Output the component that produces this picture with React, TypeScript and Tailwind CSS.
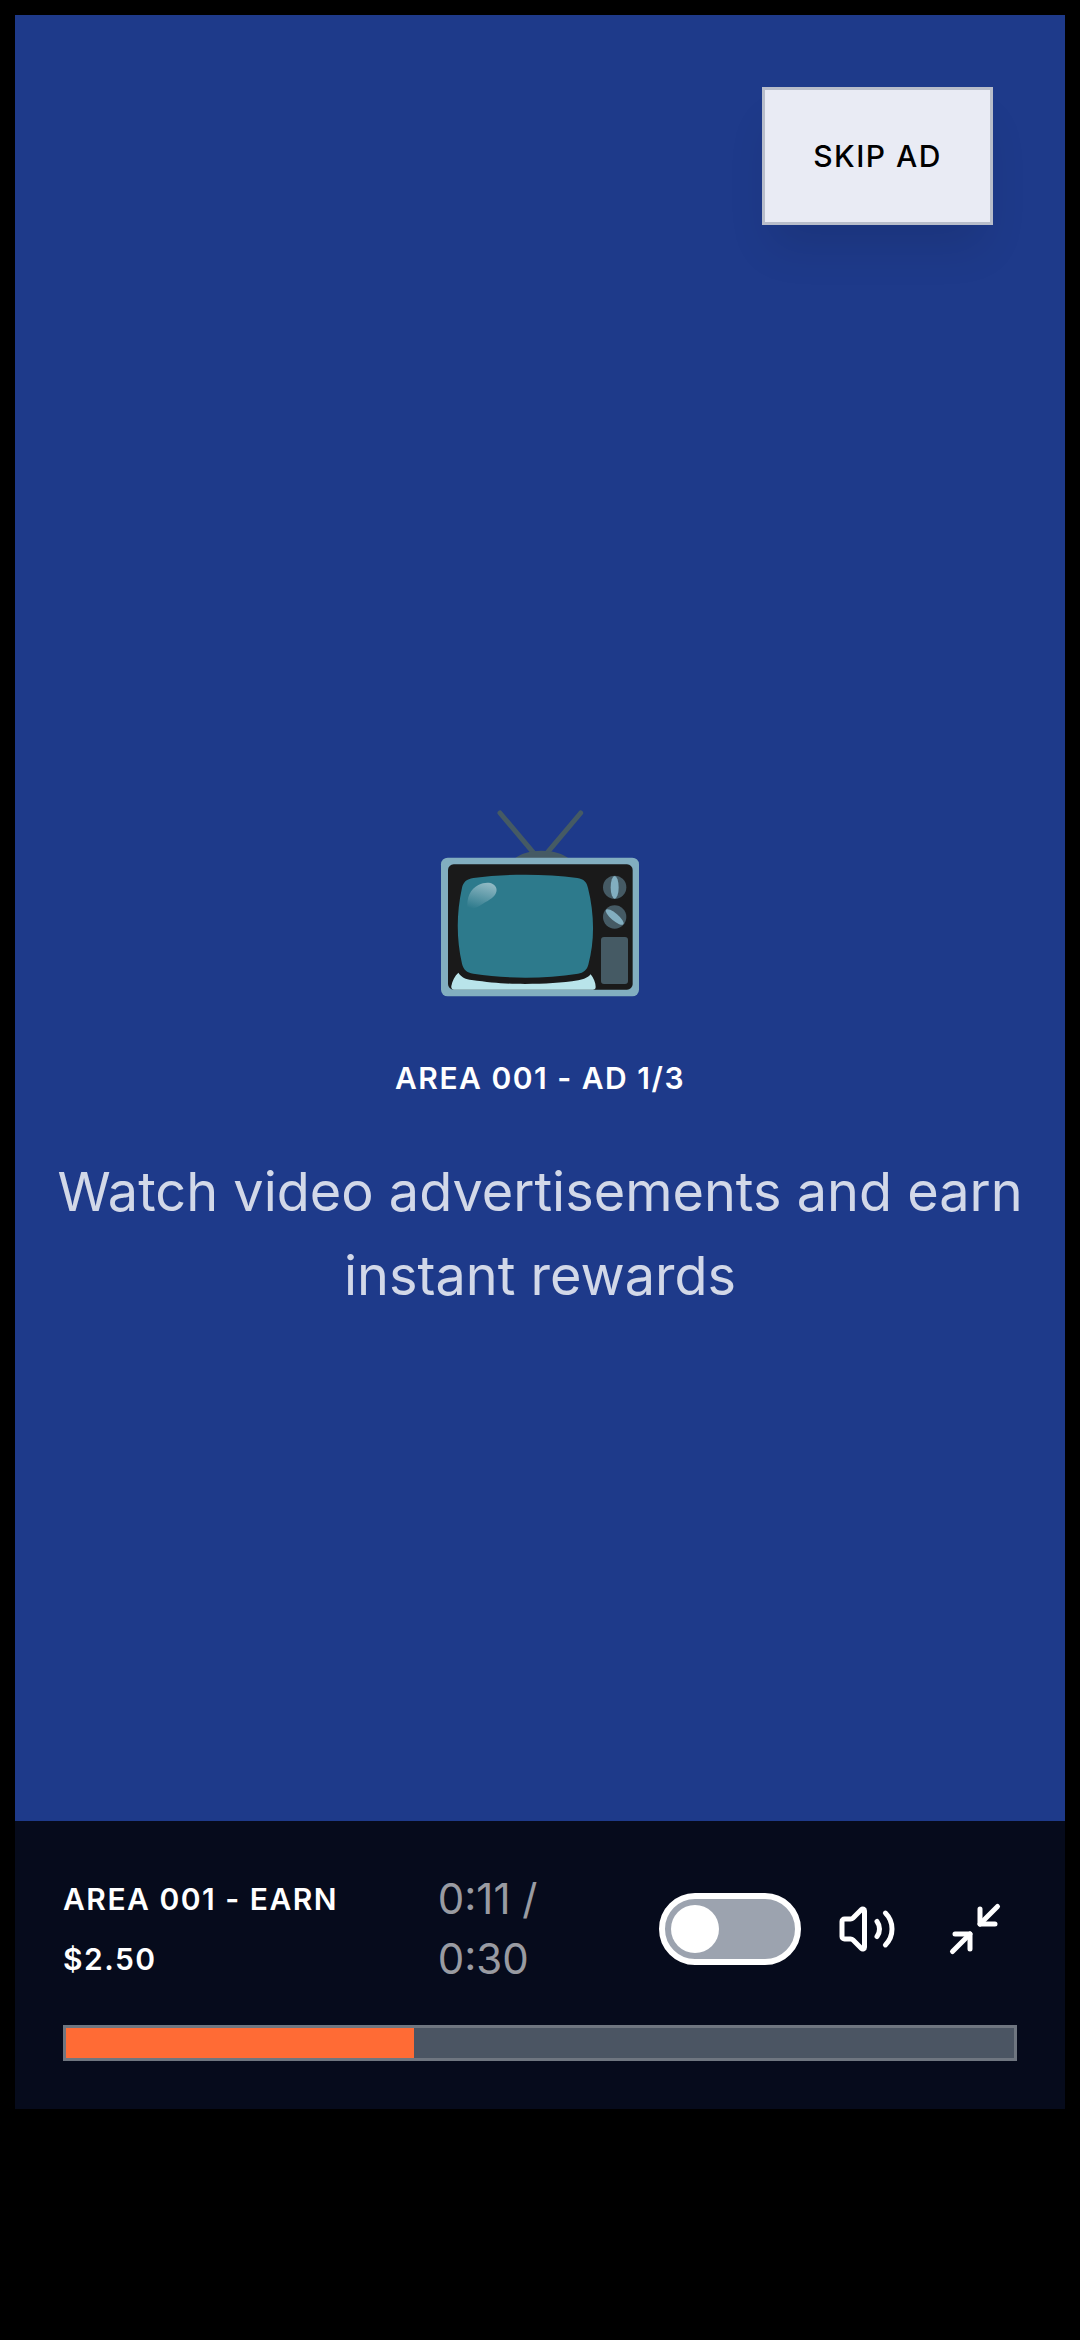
import { useState } from "react";
import { Minimize2, Volume2 } from "lucide-react";

const elapsed = 11;
const duration = 30;

function formatTime(seconds: number) {
  return `${Math.floor(seconds / 60)}:${String(seconds % 60).padStart(2, "0")}`;
}

function Television() {
  return (
    <svg viewBox="0 48 720 600" className="h-[200px] w-60" aria-hidden="true">
      <defs>
        <linearGradient id="glare" x1="0.6" y1="0" x2="0.3" y2="1">
          <stop offset="0" stopColor="#8fb8c3" />
          <stop offset="1" stopColor="#2d7a8c" />
        </linearGradient>
      </defs>
      <path d="M240 69 342 190M482 69 380 190" stroke="#455a64" strokeWidth="15" strokeLinecap="round" />
      <path d="M283 206c18-15 45-24 82-24s64 9 82 24z" fill="#455a64" />
      <rect x="63" y="203" width="594" height="416" rx="20" fill="#82aec0" />
      <rect x="84" y="223" width="554" height="376" rx="17" fill="#1a1a1a" />
      <path
        d="M115 548c10 14 22 20 40 22 60 8 100 12 160 12s110-3 160-11c18-3 28-8 37-18 9 11 15 26 15 38 0 6-3 8-9 8H102c-6 0-9-4-8-11 3-15 10-30 21-40z"
        fill="#b9e4ea"
      />
      <path
        d="M160 264c100-13 212-13 312 0 20 3 28 12 32 30 20 80 20 160 1 230-4 15-14 24-31 27-104 16-210 16-314 0-20-3-30-13-34-30-17-75-17-150 0-228 4-17 14-26 34-29z"
        fill="#2d7a8c"
      />
      <path
        d="M143 359c-5-37 9-62 32-74 24-12 49-8 54 10 4 15-8 28-26 38-24 13-38 26-60 26z"
        fill="url(#glare)"
      />
      <circle cx="584" cy="292" r="35" fill="#455a64" />
      <circle cx="584" cy="381" r="35" fill="#455a64" />
      <ellipse cx="584" cy="292" rx="12" ry="34" fill="#82aec0" />
      <ellipse cx="584" cy="381" rx="11" ry="34" fill="#82aec0" transform="rotate(-50 584 381)" />
      <rect x="543" y="441" width="81" height="141" rx="9" fill="#455a64" />
    </svg>
  );
}

export default function App() {
  const [autoplay, setAutoplay] = useState(false);

  return (
    <div className="min-h-screen bg-black font-[Inter,sans-serif]">
      <main className="relative flex h-[calc(100vh-216px)] flex-col items-center justify-center gap-[42px] border-[15px] border-black bg-[#1e3a8a] text-center text-white">
        <Television />
        <h1 className="text-[30px] leading-[60px] font-semibold tracking-wider">AREA 001 - AD 1/3</h1>
        <p className="px-6 text-[54px] leading-[84px] text-white/80">
          Watch video advertisements and earn instant rewards
        </p>

        <button
          type="button"
          className="absolute top-[72px] right-[72px] h-[138px] border-[3px] border-[#b8bdca] bg-[#e9ebf4] px-12 text-[30px] font-medium tracking-wider text-black shadow-[0_30px_45px_-9px_rgba(0,0,0,0.1)]"
        >
          SKIP AD
        </button>

        <section className="absolute inset-x-0 bottom-0 flex flex-col gap-9 bg-black/80 p-12 text-left">
          <div className="flex items-center gap-6">
            <div className="grid flex-1 grid-cols-[16fr_9fr] gap-6">
              <h2 className="text-[30px] leading-[60px] font-semibold tracking-wider">AREA 001 - EARN $2.50</h2>
              <p className="text-[42px] leading-[60px] text-white/60">
                {formatTime(elapsed)} /<br />
                {formatTime(duration)}
              </p>
            </div>
            <input
              type="checkbox"
              role="switch"
              aria-label="Autoplay"
              checked={autoplay}
              onChange={(event) => setAutoplay(event.target.checked)}
              className="h-[72px] w-[142px] shrink-0 appearance-none rounded-full border-[6px] border-white bg-[#9ca3af] p-1.5 before:block before:size-12 before:rounded-full before:bg-white checked:bg-[#ff6b35] checked:before:ml-auto"
            />
            <button type="button" aria-label="Mute" className="flex size-[84px] shrink-0 items-center justify-center">
              <Volume2 className="size-[60px]" />
            </button>
            <button type="button" aria-label="Exit full screen" className="flex size-[84px] shrink-0 items-center justify-center">
              <Minimize2 className="size-[60px]" />
            </button>
          </div>
          <div
            role="progressbar"
            aria-label="Ad progress"
            aria-valuemin={0}
            aria-valuemax={duration}
            aria-valuenow={elapsed}
            className="h-9 border-[3px] border-[#6f7680] bg-[#4b5563]"
          >
            <div className="h-full bg-[#ff6b35]" style={{ width: `${(elapsed / duration) * 100}%` }} />
          </div>
        </section>
      </main>
    </div>
  );
}
